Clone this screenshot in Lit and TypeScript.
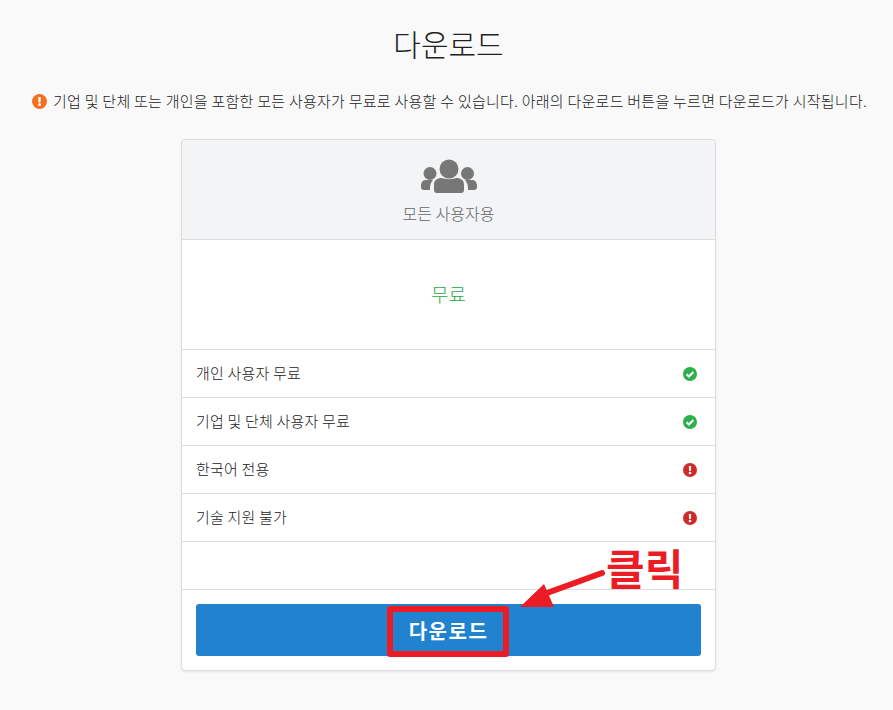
import { LitElement, css, html, svg } from "lit"
import { customElement } from "lit/decorators.js"

const okIcon = svg`<circle cx="7" cy="7" r="7" fill="#28b04a"/><path d="M3.600 7.200 6 9.500 10.400 5" fill="none" stroke="#fff" stroke-width="2.200"/>`
const badIcon = svg`<circle cx="7" cy="7" r="7" fill="#d02a2a"/><path d="M5.800 2.900h2.400l-.3 5H6.100z" fill="#fff"/><circle cx="7" cy="10" r="1.300" fill="#fff"/>`
const warnIcon = svg`<circle cx="7" cy="7" r="7" fill="#f37021"/><path d="M5.800 2.900h2.400l-.3 5H6.100z" fill="#fff"/><circle cx="7" cy="10" r="1.300" fill="#fff"/>`

const rows = [
  { label: "개인 사용자 무료", ok: true },
  { label: "기업 및 단체 사용자 무료", ok: true },
  { label: "한국어 전용", ok: false },
  { label: "기술 지원 불가", ok: false },
]

@customElement("app-root")
export class AppRoot extends LitElement {
  static styles = css`
    :host {
      display: block;
      min-height: 710px;
      background: #f9f9f9;
      color: #222;
      font-family: "Noto Sans CJK KR", "Liberation Sans", sans-serif;
      font-size: 15px;
      font-weight: 300;
    }
    main {
      display: flex;
      flex-direction: column;
      align-items: center;
      padding-left: 4px;
    }
    h1 {
      margin: 0;
      padding-top: 21px;
      height: 44px;
      font-size: 30px;
      line-height: 44px;
      font-weight: 300;
    }
    .notice {
      display: flex;
      align-items: center;
      gap: 6px;
      margin-top: 24px;
      margin-left: 2px;
      height: 24px;
      line-height: 24px;
      letter-spacing: 0.26px;
      white-space: nowrap;
    }
    .notice svg {
      width: 15px;
      height: 15px;
      flex: none;
    }
    .row svg {
      width: 14px;
      height: 14px;
      flex: none;
    }
    .card {
      position: relative;
      box-sizing: border-box;
      width: 535px;
      height: 532px;
      margin-top: 26px;
      background: #fff;
      border: 1px solid #ddd;
      border-radius: 4px;
      box-shadow: 0 1px 2px rgba(0, 0, 0, 0.08);
    }
    .head {
      height: 99px;
      display: flex;
      flex-direction: column;
      align-items: center;
      background: #f3f4f6;
      border-bottom: 1px solid #ddd;
      border-radius: 4px 4px 0 0;
      color: #666;
      font-size: 16px;
    }
    .head svg {
      width: 58px;
      height: 34px;
      margin-top: 19px;
    }
    .head span {
      margin-top: 8px;
      line-height: 24px;
    }
    .price {
      height: 110px;
      padding-bottom: 2px;
      box-sizing: border-box;
      display: flex;
      align-items: center;
      justify-content: center;
      color: #28a745;
      font-size: 19px;
      border-bottom: 1px solid #ddd;
    }
    .row {
      box-sizing: border-box;
      height: 48px;
      display: flex;
      align-items: center;
      justify-content: space-between;
      padding: 0 18px 0 14px;
      border-bottom: 1px solid #ddd;
    }
    .row span {
      margin-top: -2px;
      letter-spacing: 0.2px;
    }
    .foot {
      padding: 14px 14px 0;
    }
    .btn {
      height: 52px;
      display: flex;
      align-items: center;
      justify-content: center;
      background: #2183d0;
      border-radius: 3px;
      color: #fff;
      font-size: 20px;
      letter-spacing: 1.5px;
      font-weight: 700;
    }
    .mark-box {
      position: absolute;
      left: 205px;
      top: 466px;
      width: 122px;
      height: 51px;
      box-sizing: border-box;
      border: 6px solid #ec1c24;
      border-radius: 3px;
    }
    .mark-arrow {
      position: absolute;
      left: 330px;
      top: 420px;
      width: 100px;
      height: 50px;
    }
    .mark-text {
      position: absolute;
      left: 424px;
      top: 398px;
      color: #ec1c24;
      font-size: 42px;
      line-height: 58px;
      font-weight: 700;
      white-space: nowrap;
    }
  `

  render() {
    return html`
      <main>
        <h1>다운로드</h1>
        <div class="notice">
          <svg viewBox="0 0 14 14">${warnIcon}</svg>
          <span>기업 및 단체 또는 개인을 포함한 모든 사용자가 무료로 사용할 수 있습니다. 아래의 다운로드 버튼을 누르면 다운로드가 시작됩니다.</span>
        </div>
        <section class="card">
          <div class="head">
            <svg viewBox="0 0 58 34" fill="#777">
              <circle cx="29" cy="10" r="9.500"/>
              <circle cx="10" cy="14.500" r="6.500"/>
              <circle cx="47.500" cy="14.500" r="6.500"/>
              <path d="M1 27c0-4 2-6 5-6h7c-1.500 2-3 4-3 8v2H4a3 3 0 0 1-3-3zM57 27c0-4-2-6-5-6h-7c1.500 2 3 4 3 8v2h6a3 3 0 0 0 3-3z"/>
              <path d="M14 26c0-5 3-7 8-7 3 1.500 11 1.500 14 0 5 0 8 2 8 7v5a3 3 0 0 1-3 3H17a3 3 0 0 1-3-3z"/>
            </svg>
            <span>모든 사용자용</span>
          </div>
          <div class="price">무료</div>
          ${rows.map(
            (r) => html`<div class="row">
              <span>${r.label}</span>
              <svg viewBox="0 0 14 14">${r.ok ? okIcon : badIcon}</svg>
            </div>`
          )}
          <div class="row"></div>
          <div class="foot"><div class="btn">다운로드</div></div>
          <div class="mark-box"></div>
          <svg class="mark-arrow" viewBox="0 0 100 50">
            <path d="M90 13 35 33" stroke="#ec1c24" stroke-width="6" stroke-linecap="round"/>
            <path d="M8 47 32 24 42 47z" fill="#ec1c24"/>
          </svg>
          <div class="mark-text">클릭</div>
        </section>
      </main>
    `
  }
}
